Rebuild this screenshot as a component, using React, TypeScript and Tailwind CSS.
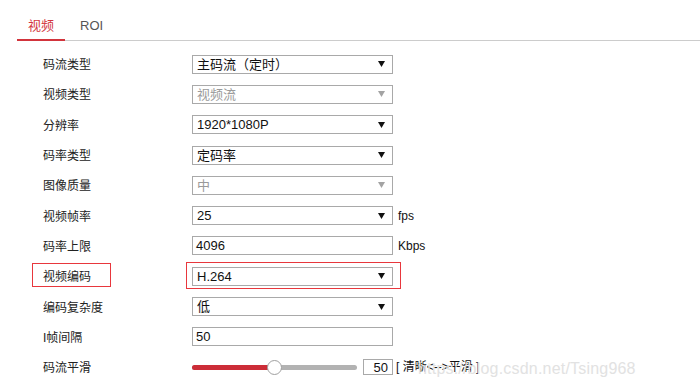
import type { ReactNode } from "react"

type Row = {
  label: string
  kind: "select" | "input" | "slider"
  value?: string
  disabled?: boolean
  unit?: string
  highlight?: boolean
}

const rows: Row[] = [
  { label: "码流类型", kind: "select", value: "主码流（定时）" },
  { label: "视频类型", kind: "select", value: "视频流", disabled: true },
  { label: "分辨率", kind: "select", value: "1920*1080P" },
  { label: "码率类型", kind: "select", value: "定码率" },
  { label: "图像质量", kind: "select", value: "中", disabled: true },
  { label: "视频帧率", kind: "select", value: "25", unit: "fps" },
  { label: "码率上限", kind: "input", value: "4096", unit: "Kbps" },
  { label: "视频编码", kind: "select", value: "H.264", highlight: true },
  { label: "编码复杂度", kind: "select", value: "低" },
  { label: "I帧间隔", kind: "input", value: "50" },
  { label: "码流平滑", kind: "slider", value: "50" },
]

const Arrow = ({ disabled }: { disabled?: boolean }) => (
  <svg width="7" height="6" viewBox="0 0 7 6" className="shrink-0">
    <path d="M0 0 H7 L3.5 6 Z" fill={disabled ? "#a3a3a3" : "#111"} />
  </svg>
)

const SelectBox = ({ value, disabled }: { value?: string; disabled?: boolean }) => (
  <div className="flex h-[19px] w-[201px] items-center justify-between border border-[#a9a9a9] bg-white pl-[4px] pr-[7px]">
    <span className={`text-[13px] leading-none ${disabled ? "text-[#9a9a9a]" : "text-[#111]"}`}>
      {value}
    </span>
    <Arrow disabled={disabled} />
  </div>
)

const InputBox = ({ value }: { value?: string }) => (
  <div className="flex h-[19px] w-[201px] items-center border border-[#a9a9a9] bg-white pl-[3px]">
    <span className="text-[13px] leading-none text-[#111]">{value}</span>
  </div>
)

const Slider = ({ value }: { value?: string }) => (
  <div className="flex items-center">
    <div className="relative h-[5px] w-[165px] rounded-full bg-[#b2b2b2]">
      <div className="h-full w-[82px] rounded-full bg-[#cc2d38]" />
      <div className="absolute left-[75px] top-[-5px] h-[15px] w-[15px] rounded-full border border-[#a0a0a0] bg-white" />
    </div>
    <div className="ml-[6px] flex h-[16px] w-[30px] items-center justify-end border border-[#a9a9a9] bg-white pr-[4px]">
      <span className="text-[13px] leading-none text-[#111]">{value}</span>
    </div>
    <span className="ml-[3px] text-[12px] text-[#111]">[ 清晰&lt;--&gt;平滑 ]</span>
  </div>
)

const Field = ({ row }: { row: Row }) => {
  let control: ReactNode
  if (row.kind === "select") control = <SelectBox value={row.value} disabled={row.disabled} />
  else if (row.kind === "input") control = <InputBox value={row.value} />
  else control = <Slider value={row.value} />

  return (
    <div className="flex h-[30.3px] items-center">
      <div className="relative w-[192px] pl-[43px]">
        <span className="text-[12px] text-[#222]">{row.label}</span>
        {row.highlight ? (
          <span className="absolute left-[32px] top-1/2 h-[24px] w-[79px] -translate-y-[13px] border border-[#e8373d]" />
        ) : null}
      </div>
      <div className="relative flex items-center">
        {control}
        {row.highlight ? (
          <span className="absolute left-[-6px] top-[-5px] h-[27px] w-[215px] border border-[#e8373d]" />
        ) : null}
        {row.unit ? (
          <span className="ml-[5px] text-[12px] text-[#111]">{row.unit}</span>
        ) : null}
      </div>
    </div>
  )
}

export default function App() {
  return (
    <div
      className="relative h-[389px] w-[700px] overflow-hidden bg-white"
      style={{ fontFamily: '"Liberation Sans", "Noto Sans CJK SC", sans-serif' }}
    >
      <div className="ml-[17px] flex h-[41px] border-b border-[#cccccc]">
        <div className="h-[41px] w-[48px] border-b-2 border-[#d2343c] pt-[18px] text-center text-[13px] leading-[15px] text-[#d2343c]">
          视频
        </div>
        <div className="h-[41px] px-[15px] pt-[18px] text-[13px] leading-[15px] text-[#555]">
          ROI
        </div>
      </div>

      <div className="pt-[8px]">
        {rows.map((row) => (
          <Field key={row.label} row={row} />
        ))}
      </div>

      <span className="absolute left-[418px] top-[357px] text-[16px] tracking-[0.2px] text-[#e2e2e2]">
        https://blog.csdn.net/Tsing968
      </span>
    </div>
  )
}
